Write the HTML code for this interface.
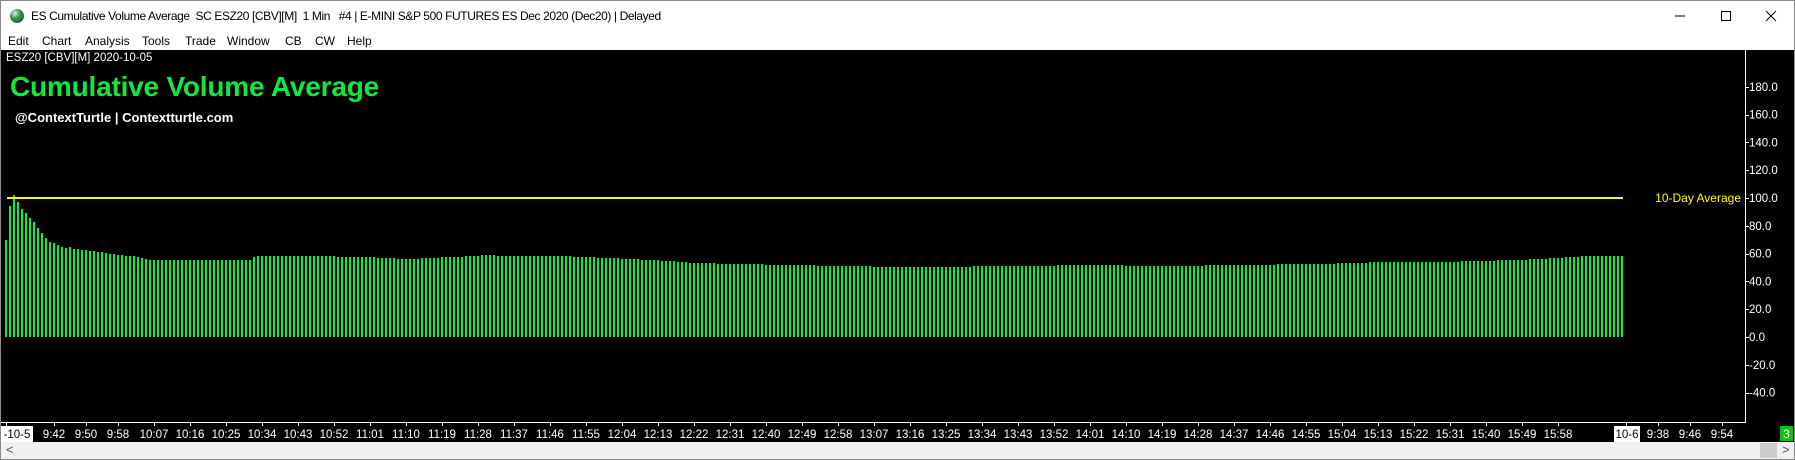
<!DOCTYPE html>
<html><head><meta charset="utf-8"><style>
*{margin:0;padding:0;box-sizing:border-box}
html,body{width:1795px;height:460px;overflow:hidden;background:#fff;font-family:"Liberation Sans",sans-serif}
#win{position:absolute;left:0;top:0;width:1795px;height:460px;border:1px solid #8a8a8a;background:#fff}
.t{position:absolute;white-space:nowrap;font-size:12px;color:#000}
</style></head><body>
<div id="win"></div>
<svg width="16" height="16" style="position:absolute;left:9px;top:8px" viewBox="0 0 16 16">
<defs><radialGradient id="g" cx="0.35" cy="0.3" r="0.8"><stop offset="0" stop-color="#cfe8ff"/><stop offset="0.5" stop-color="#3a8f3a"/><stop offset="1" stop-color="#1d4f7a"/></radialGradient></defs>
<circle cx="8" cy="8" r="7" fill="url(#g)"/></svg>
<div class="t" style="left:31px;top:9px;letter-spacing:-0.4px">ES Cumulative Volume Average&nbsp; SC ESZ20 [CBV][M]&nbsp; 1 Min&nbsp;&nbsp; #4 | E-MINI S&amp;P 500 FUTURES ES Dec 2020 (Dec20) | Delayed</div>
<svg width="120" height="20" style="position:absolute;left:1670px;top:6px">
<line x1="5" y1="10" x2="15" y2="10" stroke="#000"/>
<rect x="51.5" y="5.5" width="9" height="9" fill="none" stroke="#000"/>
<line x1="96" y1="5" x2="106" y2="15" stroke="#000"/><line x1="106" y1="5" x2="96" y2="15" stroke="#000"/>
</svg>
<div class="t" style="left:8px;top:34px">Edit</div>
<div class="t" style="left:42px;top:34px">Chart</div>
<div class="t" style="left:85px;top:34px">Analysis</div>
<div class="t" style="left:142px;top:34px">Tools</div>
<div class="t" style="left:185px;top:34px">Trade</div>
<div class="t" style="left:227px;top:34px">Window</div>
<div class="t" style="left:285px;top:34px">CB</div>
<div class="t" style="left:315px;top:34px">CW</div>
<div class="t" style="left:347px;top:34px">Help</div>
<div style="position:absolute;left:1px;top:50px;width:1793px;height:392px;background:#000"></div>
<svg id="c" width="1795" height="460" style="position:absolute;left:0;top:0" font-family="Liberation Sans, sans-serif"></svg>
<div class="t" style="left:6px;top:52px;color:#fff;font-size:11.5px">ESZ20 [CBV][M] 2020-10-05</div>
<div class="t" style="left:10px;top:71px;color:#10e840;font-size:28px;font-weight:bold;letter-spacing:-0.2px">Cumulative Volume Average</div>
<div class="t" style="left:15px;top:110px;color:#fff;font-size:13px;font-weight:bold">@ContextTurtle | Contextturtle.com</div>
<div style="position:absolute;left:1px;top:442px;width:1793px;height:17px;background:#f0f0f0"></div>
<div class="t" style="left:6px;top:442px;color:#555;font-size:13px">&lt;</div>
<div style="position:absolute;left:1760px;top:443px;width:17px;height:15px;background:#cdcdcd"></div>
<div class="t" style="left:1782px;top:442px;color:#555;font-size:13px">&gt;</div>
<script>
var s='';
var e=[240,206,195,202,209,213,218,222,228,233,238,242,243,245,247,248,247,249,249,250,250,251,251,252,252,253,254,254,255,255,256,256,256,257,258,259,260,260,260,260,260,260,260,260,260,260,260,260,260,260,260,260,260,260,260,260,260,260,260,260,260,260];
var kp=[[250,258],[259,256],[303,256],[366,257],[406,259],[429,258],[473,256],[482,255],[509,256],[558,256],[607,258],[652,260],[696,263],[732,264],[795,265],[835,266],[906,267],[1036,266],[1071,265],[1174,266],[1232,265],[1321,264],[1384,262],[1438,262],[1482,261],[1540,259],[1589,256],[1624,256]];
function f(x){for(var k=0;k<kp.length-1;k++){if(x<=kp[k+1][0]){var a=kp[k],b=kp[k+1];return Math.round(a[1]+(b[1]-a[1])*(x-a[0])/(b[0]-a[0]));}}return 256;}
for(var i=0;i<=404;i++){var x=5+4*i;var y=i<e.length?e[i]:f(x);s+='<rect x="'+x+'" y="'+y+'" width="2" height="'+(337-y)+'" fill="#10e84a"/>';}
s+='<rect x="7" y="197" width="1616" height="2" fill="#ffff00"/>';
s+='<text x="1741" y="202" fill="#ffff00" font-size="12" text-anchor="end">10-Day Average</text>';
s+='<rect x="1745" y="50" width="1" height="373" fill="#fff"/><rect x="1" y="422" width="1745" height="1" fill="#fff"/>';
for(var v=180;v>=-40;v-=20){var yy=337-(v*1.39);s+='<rect x="1745" y="'+Math.round(yy)+'" width="4" height="1" fill="#fff"/><text x="1749" y="'+(yy+4)+'" fill="#fff" font-size="11.5">'+v.toFixed(1)+'</text>';}
var labs=[[6,'-10-5',1],[54,'9:42'],[86,'9:50'],[118,'9:58']];
var t=9*60+58;var x=118;
for(var m=0;m<40;m++){t+=9;x+=36;var h=Math.floor(t/60),mm=t%60;labs.push([x,h+':'+(mm<10?'0':'')+mm]);}
labs.push([1626,'10-6',1]);labs.push([1658,'9:38']);labs.push([1690,'9:46']);labs.push([1722,'9:54']);
labs.forEach(function(l){s+='<rect x="'+l[0]+'" y="422" width="1" height="4" fill="#fff"/>';
if(l[2]){var w=l[1]=='10-6'?26:32;var lx=l[1]=='10-6'?l[0]-12:1;s+='<rect x="'+lx+'" y="426" width="'+w+'" height="16" fill="#fff"/><text x="'+(lx+w/2)+'" y="438" fill="#000" font-size="11.5" text-anchor="middle">'+l[1]+'</text>';}
else s+='<text x="'+l[0]+'" y="438" fill="#fff" font-size="11.5" text-anchor="middle">'+l[1]+'</text>';});
s+='<rect x="1780" y="426" width="13" height="15" fill="#10c010"/><text x="1786.5" y="438" fill="#fff" font-size="12" text-anchor="middle">3</text>';
document.getElementById('c').innerHTML=s;
</script>
</body></html>
